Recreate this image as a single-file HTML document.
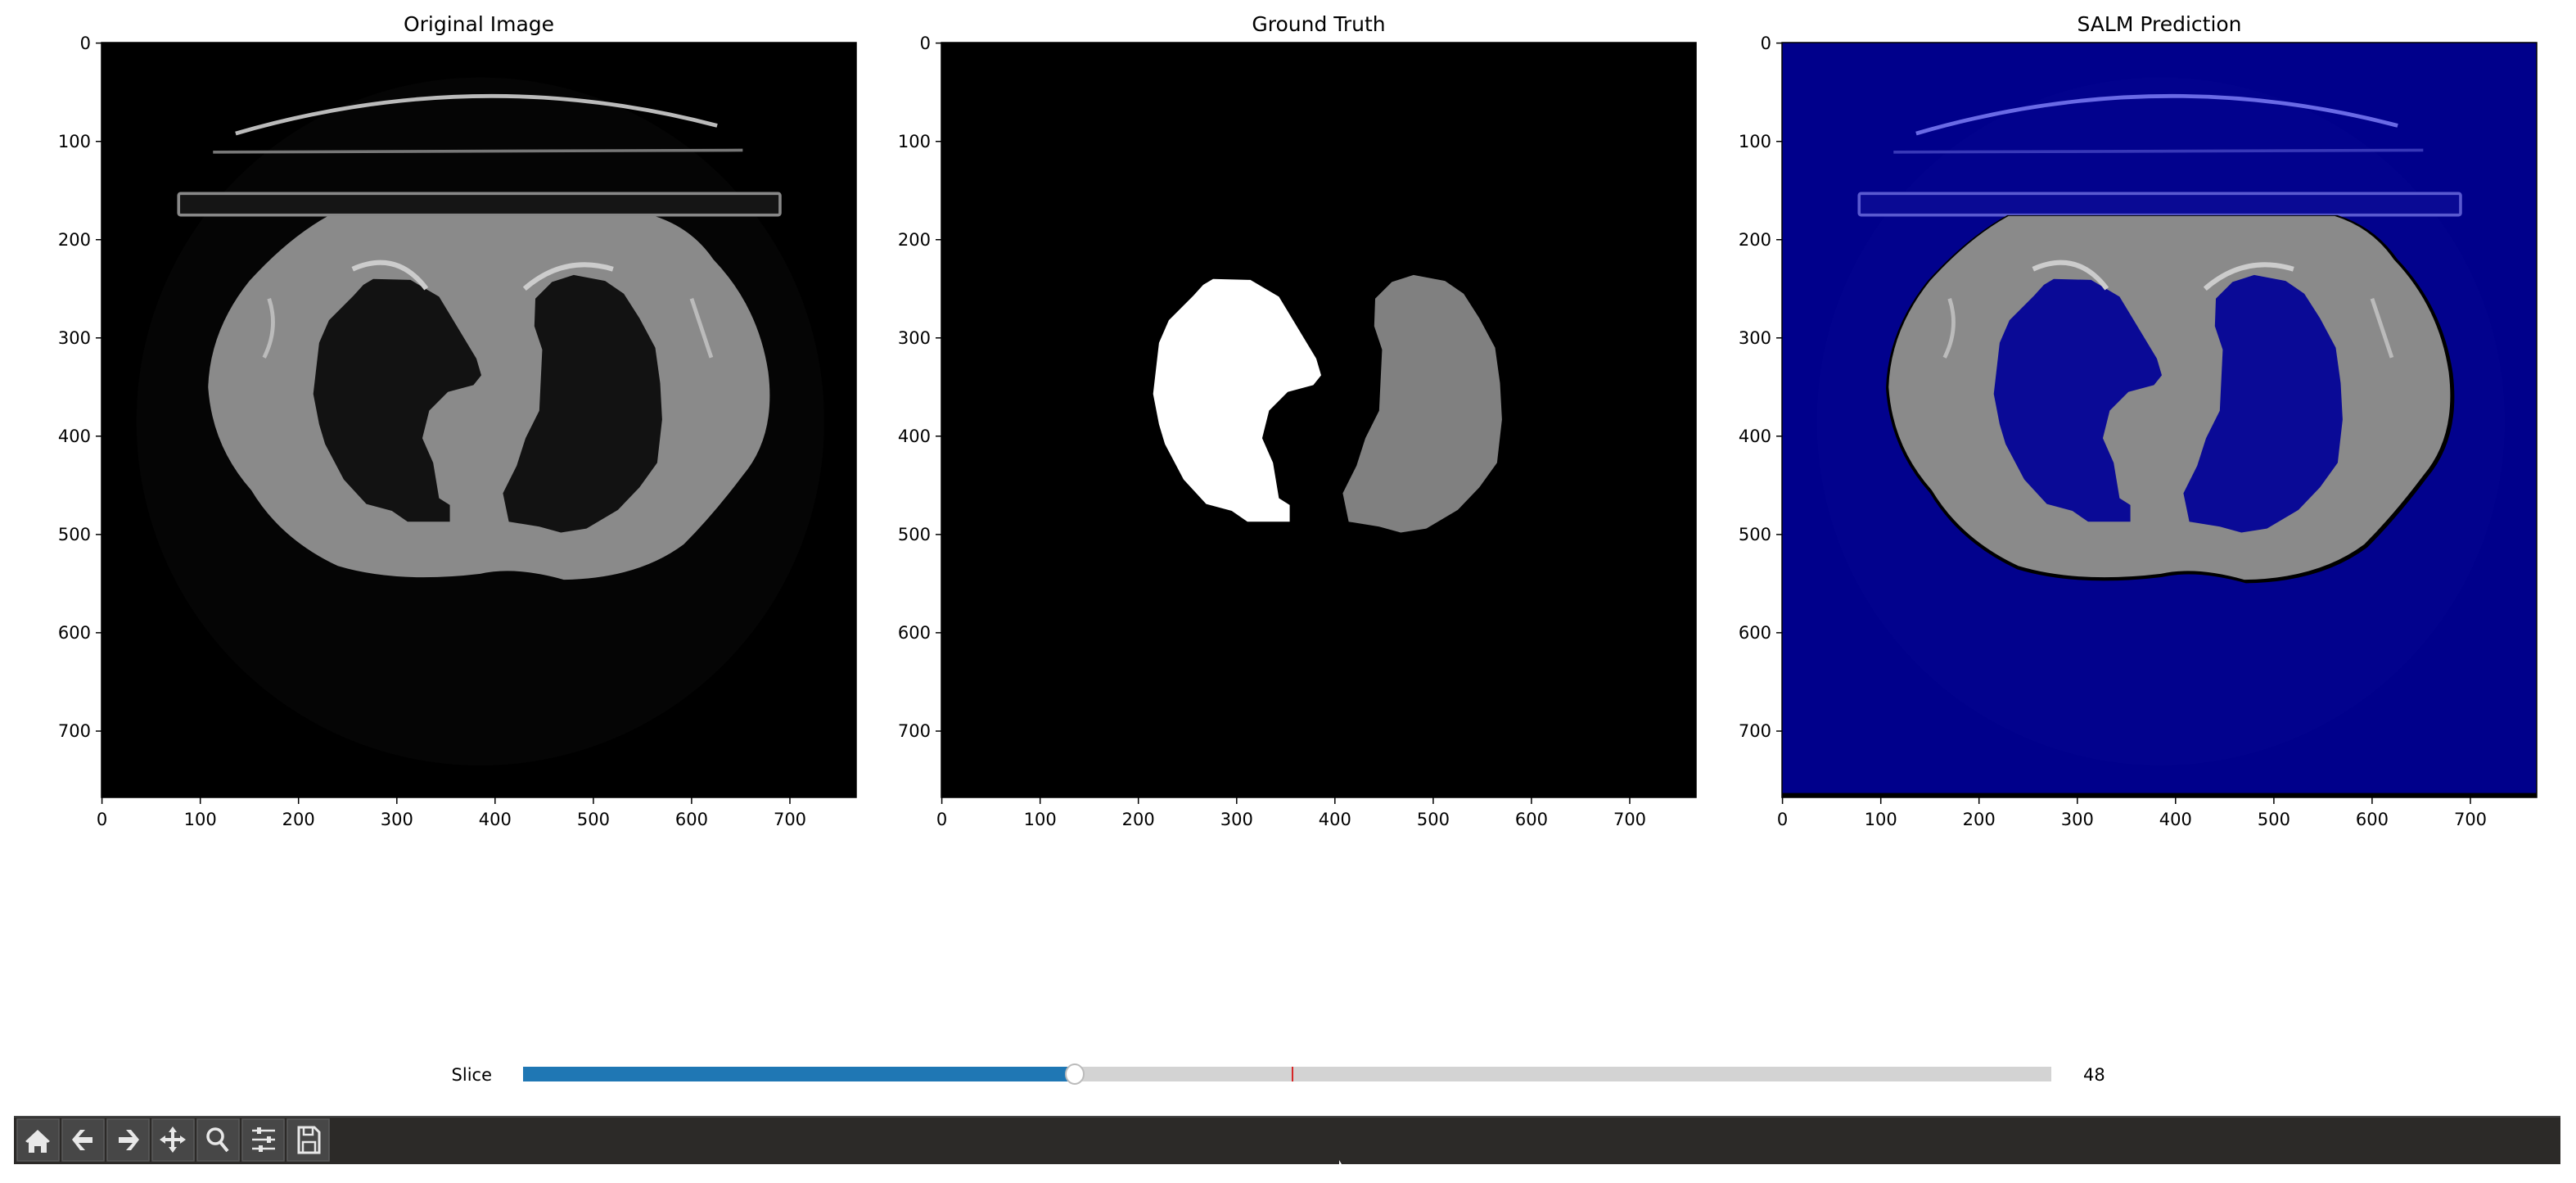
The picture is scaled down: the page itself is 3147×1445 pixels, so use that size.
<!DOCTYPE html>
<html><head><meta charset="utf-8"><style>
html,body{margin:0;padding:0;background:#fff;width:3147px;height:1445px;overflow:hidden}
text{font-family:"DejaVu Sans","Liberation Sans",sans-serif;fill:#000}
</style></head><body>
<svg width="3147" height="1445" viewBox="0 0 3147 1445" xmlns="http://www.w3.org/2000/svg">
<defs>
<path id="lungR" d="M276,240 L314,241 L343,258 L381,321 L386,338 L378,348 L352,355 L333,374 L326,402 L337,427 L343,463 L354,470 L354,487 L311,487 L295,476 L269,469 L246,444 L227,408 L221,388 L215,357 L221,305 L231,282 L256,257 L266,246 Z"/>
<path id="lungL" d="M480,236 L512,242 L531,255 L547,280 L563,310 L568,346 L570,383 L565,427 L547,452 L525,475 L493,494 L467,498 L445,492 L414,487 L408,458 L422,430 L431,402 L445,374 L448,312 L440,288 L441,260 L458,243 Z"/>
<path id="body" d="M230,176 L562,176 Q600,188 622,220 Q668,268 678,335 Q686,400 652,440 Q622,480 592,510 Q545,545 470,546 Q420,532 385,540 Q300,550 240,532 Q182,505 152,455 Q112,410 108,350 Q110,292 150,242 Q190,198 230,176 Z"/>
</defs>

<text x="585" y="38" font-size="25" text-anchor="middle">Original Image</text>
<text x="1611" y="38" font-size="25" text-anchor="middle">Ground Truth</text>
<text x="2638" y="38" font-size="25" text-anchor="middle">SALM Prediction</text>

<svg x="124" y="52" width="922" height="922" viewBox="-0.5 -0.5 768 768" preserveAspectRatio="none">
<rect x="-1" y="-1" width="770" height="770" fill="#000"/>
<circle cx="385" cy="385" r="350" fill="#050505"/>
<path d="M136,92 Q383,20 626,84" stroke="#bbb" stroke-width="4" fill="none"/>
<line x1="113" y1="111" x2="652" y2="109" stroke="#777" stroke-width="3"/>
<rect x="78" y="153" width="612" height="22" fill="#151515" stroke="#888" stroke-width="3" rx="2"/>
<use href="#body" fill="#8a8a8a"/>
<use href="#lungR" fill="#121212"/>
<use href="#lungL" fill="#121212"/>
<path d="M255,230 Q300,210 330,250 M430,250 Q470,215 520,230" stroke="#ccc" stroke-width="5" fill="none"/>
<path d="M165,320 Q180,290 170,260 M600,260 Q610,290 620,320" stroke="#bbb" stroke-width="4" fill="none"/>
</svg>
<rect x="124" y="52" width="922" height="922" fill="none" stroke="#000" stroke-width="1.5"/>

<svg x="1150" y="52" width="922" height="922" viewBox="-0.5 -0.5 768 768" preserveAspectRatio="none">
<rect x="-1" y="-1" width="770" height="770" fill="#000"/>
<use href="#lungR" fill="#fff"/>
<use href="#lungL" fill="#808080"/>
</svg>
<rect x="1150" y="52" width="922" height="922" fill="none" stroke="#000" stroke-width="1.5"/>

<svg x="2177" y="52" width="922" height="922" viewBox="-0.5 -0.5 768 768" preserveAspectRatio="none">
<rect x="-1" y="-1" width="770" height="770" fill="#00008b"/>
<rect x="-1" y="763" width="770" height="7" fill="#000"/>
<circle cx="385" cy="385" r="350" fill="#02028d"/>
<path d="M136,92 Q383,20 626,84" stroke="#6a6ae6" stroke-width="4" fill="none"/>
<line x1="113" y1="111" x2="652" y2="109" stroke="#3838b8" stroke-width="3"/>
<rect x="78" y="153" width="612" height="22" fill="#0a0a94" stroke="#5a5ad0" stroke-width="3" rx="2"/>
<use href="#body" fill="#000" transform="translate(-4,-3) scale(1.012)"/>
<use href="#body" fill="#8a8a8a"/>
<use href="#lungR" fill="#0a0a96"/>
<use href="#lungL" fill="#0a0a96"/>
<path d="M255,230 Q300,210 330,250 M430,250 Q470,215 520,230" stroke="#ccc" stroke-width="5" fill="none"/>
<path d="M165,320 Q180,290 170,260 M600,260 Q610,290 620,320" stroke="#bbb" stroke-width="4" fill="none"/>
</svg>
<rect x="2177" y="52" width="922" height="922" fill="none" stroke="#000" stroke-width="1.5"/>

<g stroke="#000" stroke-width="1.5">
<path d="M124.6,974v8M244.7,974v8M364.7,974v8M484.8,974v8M604.8,974v8M724.9,974v8M844.9,974v8M965,974v8
M117,52.6h7M117,172.7h7M117,292.7h7M117,412.8h7M117,532.8h7M117,652.9h7M117,772.9h7M117,893h7
M1150.6,974v8M1270.7,974v8M1390.7,974v8M1510.8,974v8M1630.8,974v8M1750.9,974v8M1870.9,974v8M1991,974v8
M1143,52.6h7M1143,172.7h7M1143,292.7h7M1143,412.8h7M1143,532.8h7M1143,652.9h7M1143,772.9h7M1143,893h7
M2177.6,974v8M2297.7,974v8M2417.7,974v8M2537.8,974v8M2657.8,974v8M2777.9,974v8M2897.9,974v8M3018,974v8
M2170,52.6h7M2170,172.7h7M2170,292.7h7M2170,412.8h7M2170,532.8h7M2170,652.9h7M2170,772.9h7M2170,893h7"/>
</g>
<g font-size="21" text-anchor="middle">
<text x="124.6" y="1008">0</text><text x="244.7" y="1008">100</text><text x="364.7" y="1008">200</text><text x="484.8" y="1008">300</text><text x="604.8" y="1008">400</text><text x="724.9" y="1008">500</text><text x="844.9" y="1008">600</text><text x="965" y="1008">700</text>
<text x="1150.6" y="1008">0</text><text x="1270.7" y="1008">100</text><text x="1390.7" y="1008">200</text><text x="1510.8" y="1008">300</text><text x="1630.8" y="1008">400</text><text x="1750.9" y="1008">500</text><text x="1870.9" y="1008">600</text><text x="1991" y="1008">700</text>
<text x="2177.6" y="1008">0</text><text x="2297.7" y="1008">100</text><text x="2417.7" y="1008">200</text><text x="2537.8" y="1008">300</text><text x="2657.8" y="1008">400</text><text x="2777.9" y="1008">500</text><text x="2897.9" y="1008">600</text><text x="3018" y="1008">700</text>
</g>
<g font-size="21" text-anchor="end">
<text x="111" y="60">0</text><text x="111" y="180">100</text><text x="111" y="300">200</text><text x="111" y="420">300</text><text x="111" y="540">400</text><text x="111" y="660">500</text><text x="111" y="780">600</text><text x="111" y="900">700</text>
<text x="1137" y="60">0</text><text x="1137" y="180">100</text><text x="1137" y="300">200</text><text x="1137" y="420">300</text><text x="1137" y="540">400</text><text x="1137" y="660">500</text><text x="1137" y="780">600</text><text x="1137" y="900">700</text>
<text x="2164" y="60">0</text><text x="2164" y="180">100</text><text x="2164" y="300">200</text><text x="2164" y="420">300</text><text x="2164" y="540">400</text><text x="2164" y="660">500</text><text x="2164" y="780">600</text><text x="2164" y="900">700</text>
</g>

<text x="601" y="1320" font-size="21" text-anchor="end">Slice</text>
<rect x="639" y="1303" width="1867" height="18" fill="#d3d3d3"/>
<rect x="639" y="1303" width="673" height="18" fill="#1f77b4"/>
<line x1="1579" y1="1303" x2="1579" y2="1321" stroke="#d62728" stroke-width="2"/>
<ellipse cx="1313" cy="1312" rx="11" ry="12" fill="#fff" stroke="#bbb" stroke-width="2"/>
<text x="2545" y="1320" font-size="21">48</text>

<rect x="17" y="1363" width="3111" height="59" fill="#2c2a28"/>
<rect x="17" y="1363" width="3111" height="2" fill="#444"/>
<g fill="#474747" stroke="#5a5a5a" stroke-width="1.5">
<rect x="21" y="1367" width="51" height="51"/><rect x="76" y="1367" width="51" height="51"/><rect x="131" y="1367" width="51" height="51"/><rect x="186" y="1367" width="51" height="51"/><rect x="241" y="1367" width="51" height="51"/><rect x="296" y="1367" width="51" height="51"/><rect x="351" y="1367" width="51" height="51"/>
</g>
<g fill="#e8e8e8" stroke="none">
<path d="M46,1380 L61,1394 L58,1396 L57,1395 L57,1408 L50,1408 L50,1400 L42,1400 L42,1408 L35,1408 L35,1395 L34,1396 L31,1394 Z"/>
<path d="M88,1392 L98,1380 L104,1380 L96,1389 L113,1389 L113,1396 L96,1396 L104,1405 L98,1405 Z"/>
<path d="M170,1392 L160,1380 L154,1380 L162,1389 L145,1389 L145,1396 L162,1396 L154,1405 L160,1405 Z"/>
<path d="M211,1376 L216,1383 L213,1383 L213,1390 L220,1390 L220,1387 L227,1392 L220,1397 L220,1394 L213,1394 L213,1401 L216,1401 L211,1408 L206,1401 L209,1401 L209,1394 L202,1394 L202,1397 L195,1392 L202,1387 L202,1390 L209,1390 L209,1383 L206,1383 Z"/>
</g>
<circle cx="263" cy="1388" r="9" fill="none" stroke="#e8e8e8" stroke-width="3.5"/>
<line x1="269" y1="1395" x2="278" y2="1406" stroke="#e8e8e8" stroke-width="4"/>
<g stroke="#e8e8e8" stroke-width="2.5"><line x1="308" y1="1381" x2="336" y2="1381"/><line x1="308" y1="1392" x2="336" y2="1392"/><line x1="308" y1="1403" x2="336" y2="1403"/></g>
<g fill="#e8e8e8"><rect x="314" y="1377" width="5" height="8"/><rect x="326" y="1388" width="5" height="8"/><rect x="316" y="1399" width="5" height="8"/></g>
<path d="M365,1377 L384,1377 L390,1383 L390,1408 L365,1408 Z" fill="none" stroke="#e8e8e8" stroke-width="3"/>
<rect x="371" y="1377" width="11" height="9" fill="none" stroke="#e8e8e8" stroke-width="2.5"/>
<rect x="370" y="1395" width="15" height="13" fill="none" stroke="#e8e8e8" stroke-width="2.5"/>
<path d="M1636,1417 L1636,1422 L1639,1422 Z" fill="#fff"/>
</svg>
</body></html>
